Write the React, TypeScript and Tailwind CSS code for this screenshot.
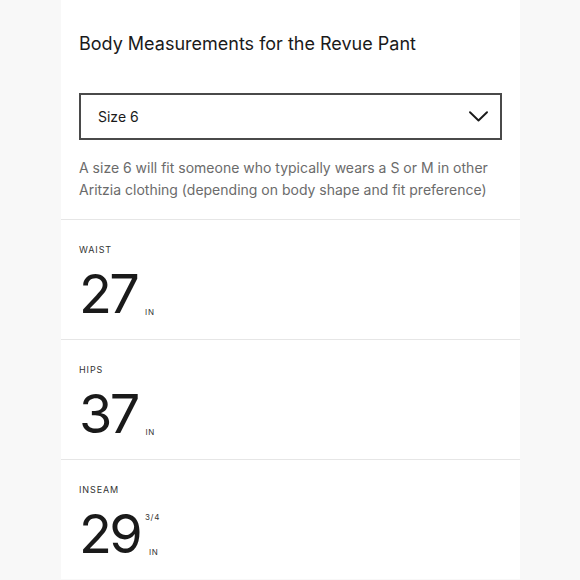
import React from "react";

function Chevron() {
  return (
    <svg width="19" height="11" viewBox="0 0 19 11" fill="none">
      <path d="M1 1.2 L9.5 9.5 L18 1.2" stroke="#1a1a1a" strokeWidth="1.9" strokeLinecap="round" strokeLinejoin="round" />
    </svg>
  );
}

function Measure({ label, value, frac }: { label: string; value: string; frac?: string }) {
  return (
    <div className="h-[120px] border-t border-[#e6e6e6] px-[18px] pt-[25px]">
      <div className="text-[9px] leading-[10px] tracking-[0.1em] text-[#333]">{label}</div>
      <div className="mt-[15px] flex items-end">
        <span className="text-[54px] leading-[47px] tracking-[-0.05em] text-[#1a1a1a]">{value}</span>
        <span className={"flex flex-col items-start text-[8px] leading-[9px] tracking-[0.08em] text-[#333] " + (frac ? "ml-[5px]" : "ml-[8px]")}>
          {frac ? <span className="mb-[26px]">{frac}</span> : null}
          <span className={frac ? "ml-[4px]" : ""}>IN</span>
        </span>
      </div>
    </div>
  );
}

export default function App() {
  return (
    <div className="min-h-[580px] w-[580px] bg-[#f8f8f8] font-['Inter',sans-serif]">
      <div className="ml-[61px] w-[459px] bg-white">
        <div className="px-[18px] pt-[32px] pb-[18px]">
          <h1 className="text-[18px] leading-[24px] text-[#1a1a1a]">Body Measurements for the Revue Pant</h1>
          <div className="mt-[37px] flex h-[47px] items-center justify-between border-2 border-[#4a4a4a] pl-[17px] pr-[12px]">
            <span className="text-[14px] text-[#1a1a1a]">Size 6</span>
            <Chevron />
          </div>
          <p className="mt-[17px] text-[14px] leading-[22px] text-[#6b6b6b]">
            A size 6 will fit someone who typically wears a S or M in other Aritzia clothing (depending on body shape and fit preference)
          </p>
        </div>
        <Measure label="WAIST" value="27" />
        <Measure label="HIPS" value="37" />
        <Measure label="INSEAM" value="29" frac="3/4" />
      </div>
    </div>
  );
}
